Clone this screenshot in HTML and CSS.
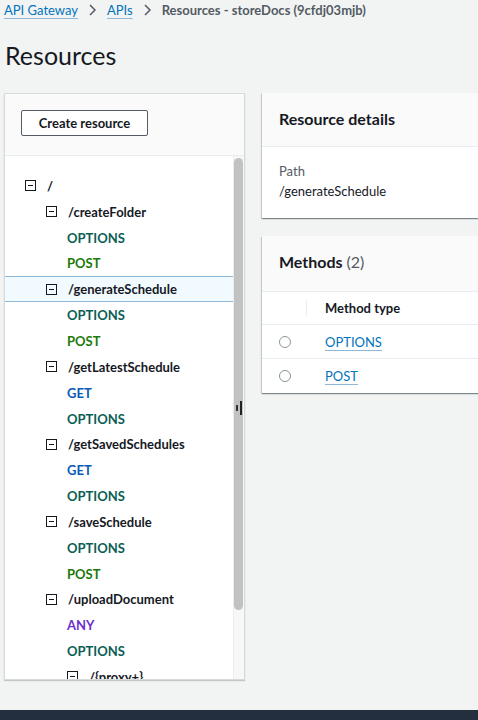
FILE: index.html
```html
<!DOCTYPE html>
<html>
<head>
<meta charset="utf-8">
<link rel="stylesheet" href="styles.css">
</head>
<body>
<div class="page">
  <div class="content">
    <nav class="crumbs">
      <a class="crumb-link">API Gateway</a>
      <svg class="chev" width="7" height="12" viewBox="0 0 7 12"><path d="M1 1l5 5-5 5" fill="none" stroke="#545b64" stroke-width="1.5"/></svg>
      <a class="crumb-link">APIs</a>
      <svg class="chev" width="7" height="12" viewBox="0 0 7 12"><path d="M1 1l5 5-5 5" fill="none" stroke="#545b64" stroke-width="1.5"/></svg>
      <span class="crumb-current">Resources - storeDocs (9cfdj03mjb)</span>
    </nav>
    <h1 class="title">Resources</h1>
    <div class="layout">
      <section class="tree-panel">
        <div class="tree-head">
          <button class="btn">Create resource</button>
        </div>
        <div class="tree-body">
          <div class="tree">
            <div class="row l0"><span class="box"></span><span class="path">/</span></div>
            <div class="row l1"><span class="box"></span><span class="path">/createFolder</span></div>
            <div class="row m"><span class="m-options">OPTIONS</span></div>
            <div class="row m"><span class="m-post">POST</span></div>
            <div class="row l1 selected"><span class="box"></span><span class="path">/generateSchedule</span></div>
            <div class="row m"><span class="m-options">OPTIONS</span></div>
            <div class="row m"><span class="m-post">POST</span></div>
            <div class="row l1"><span class="box"></span><span class="path">/getLatestSchedule</span></div>
            <div class="row m"><span class="m-get">GET</span></div>
            <div class="row m"><span class="m-options">OPTIONS</span></div>
            <div class="row l1"><span class="box"></span><span class="path">/getSavedSchedules</span></div>
            <div class="row m"><span class="m-get">GET</span></div>
            <div class="row m"><span class="m-options">OPTIONS</span></div>
            <div class="row l1"><span class="box"></span><span class="path">/saveSchedule</span></div>
            <div class="row m"><span class="m-options">OPTIONS</span></div>
            <div class="row m"><span class="m-post">POST</span></div>
            <div class="row l1"><span class="box"></span><span class="path">/uploadDocument</span></div>
            <div class="row m"><span class="m-any">ANY</span></div>
            <div class="row m"><span class="m-options">OPTIONS</span></div>
            <div class="row l2"><span class="box"></span><span class="path">/{proxy+}</span></div>
          </div>
          <div class="scrollbar"><div class="thumb"></div></div>
          <div class="resize-handle"><span class="h1"></span><span class="h2"></span></div>
        </div>
      </section>
      <div class="right">
        <section class="card">
          <div class="card-head details-head"><h2 class="card-title">Resource details</h2></div>
          <div class="card-body">
            <div class="label">Path</div>
            <div class="value">/generateSchedule</div>
          </div>
        </section>
        <section class="card">
          <div class="card-head methods-head"><h2 class="card-title">Methods <span class="count">(2)</span></h2></div>
          <div class="table">
            <div class="tr th"><div class="c-radio"><span class="sep"></span></div><div class="c-type">Method type</div></div>
            <div class="tr"><div class="c-radio"><span class="radio"></span></div><div class="c-type"><a class="link">OPTIONS</a></div></div>
            <div class="tr"><div class="c-radio"><span class="radio"></span></div><div class="c-type"><a class="link">POST</a></div></div>
          </div>
        </section>
      </div>
    </div>
  </div>
  <footer class="footer"></footer>
</div>
</body>
</html>
```

FILE: styles.css
```css
html, body {
  margin: 0;
  padding: 0;
  background: #f2f3f3;
  overflow: hidden;
}
body {
  font-family: Lato, "Open Sans", Arial, sans-serif;
  color: #16191f;
  width: 478px;
  height: 720px;
}
.page {
  height: 720px;
  display: flex;
  flex-direction: column;
}
.content {
  flex: 1;
  padding-left: 4px;
  overflow: hidden;
}
.crumbs {
  display: flex;
  align-items: center;
  height: 20px;
  font-size: 13px;
  gap: 11px;
  white-space: nowrap;
}
.crumb-link {
  color: #0073bb;
  text-decoration: underline;
  text-underline-offset: 3px;
  text-decoration-color: #8fb8d8;
}
.chev { display: block; }
.crumb-current {
  color: #545b64;
  font-weight: 700;
}
.title {
  margin: 20px 0 0 1px;
  font-size: 25px;
  line-height: 30px;
  font-weight: 400;
  color: #16191f;
}
.layout {
  display: grid;
  grid-template-columns: 241px 330px;
  column-gap: 17px;
  margin-top: 23px;
  align-items: start;
}
.tree-panel {
  height: 587px;
  box-sizing: border-box;
  border: 1px solid #d5dbdb;
  background: #fff;
  display: flex;
  flex-direction: column;
  box-shadow: 0 1px 1px 0 rgba(0,28,36,.2);
}
.tree-head {
  height: 62px;
  flex: none;
  background: #fafafa;
  border-bottom: 1px solid #eaeded;
  padding: 16px 0 0 16px;
  box-sizing: border-box;
}
.btn {
  width: 127px;
  height: 26px;
  background: #fff;
  border: 1px solid #545b64;
  border-radius: 2px;
  font-family: inherit;
  font-size: 13px;
  font-weight: 700;
  color: #16191f;
  padding: 0;
}
.tree-body {
  flex: 1;
  display: flex;
  position: relative;
  overflow: hidden;
}
.tree {
  flex: 1;
  padding-top: 17px;
}
.row {
  height: 25.85px;
  box-sizing: border-box;
  display: flex;
  align-items: center;
  gap: 11px;
  font-size: 13px;
  font-weight: 700;
  white-space: nowrap;
}
.l0 { padding-left: 20px; }
.l1 { padding-left: 41px; }
.l2 { padding-left: 62px; }
.m { padding-left: 62px; }
.selected {
  background: #f1faff;
  border-top: 1px solid #8fb8d8;
  border-bottom: 1px solid #8fb8d8;
}
.box {
  width: 11px;
  height: 11px;
  box-sizing: border-box;
  border: 1px solid #16191f;
  position: relative;
  flex: none;
}
.box::after {
  content: "";
  position: absolute;
  left: 2px;
  right: 2px;
  top: 4px;
  height: 1px;
  background: #16191f;
}
.path { color: #16191f; }
.m-options { color: #0b5e55; }
.m-post { color: #1d7a0a; }
.m-get { color: #0b5bb5; }
.m-any { color: #6b2fd0; }
.scrollbar {
  width: 10px;
  flex: none;
  background: #f7f7f7;
  border-left: 1px solid #eaeded;
  padding-top: 2px;
}
.thumb {
  width: 9px;
  height: 452px;
  background: #c2c2c2;
  border-radius: 5px;
}
.resize-handle {
  position: absolute;
  left: 231px;
  top: 245px;
  display: flex;
  align-items: center;
  gap: 2px;
}
.h1 { width: 2px; height: 6px; background: #333; }
.h2 { width: 2px; height: 14px; background: #222; }
.right {
  display: flex;
  flex-direction: column;
  gap: 18px;
}
.card {
  background: #fff;
  box-shadow: 0 1px 1px 0 rgba(0,28,36,.3), 1px 1px 1px 0 rgba(0,28,36,.15), -1px 1px 1px 0 rgba(0,28,36,.15);
}
.card-head {
  height: 54px;
  background: #fafafa;
  border-bottom: 1px solid #eaeded;
  box-sizing: border-box;
  display: flex;
  align-items: center;
  padding-left: 17px;
}
.details-head { padding-bottom: 2px; }
.methods-head { height: 56px; padding-bottom: 5px; }
.card-title {
  margin: 0;
  font-size: 16px;
  font-weight: 700;
  color: #16191f;
}
.count { font-weight: 400; color: #545b64; }
.card-body {
  padding: 14px 17px 0;
  height: 71px;
  box-sizing: border-box;
  font-size: 13px;
}
.label { color: #545b64; line-height: 20px; }
.value { color: #16191f; line-height: 20px; }
.table { font-size: 13px; }
.tr {
  display: flex;
  align-items: center;
  height: 34px;
  border-bottom: 1px solid #eaeded;
  box-sizing: border-box;
}
.tr:last-child { border-bottom: none; }
.th { height: 33px; font-weight: 700; }
.c-radio {
  width: 45px;
  height: 100%;
  display: flex;
  align-items: center;
  justify-content: flex-start;
  position: relative;
  padding-left: 17px;
  box-sizing: border-box;
}
.sep {
  position: absolute;
  right: 0;
  top: 8px;
  height: 16px;
  width: 1px;
  background: #eaeded;
}
.radio {
  width: 12px;
  height: 12px;
  border: 1px solid #879596;
  border-radius: 50%;
  box-sizing: border-box;
}
.c-type { padding-left: 18px; }
.link {
  color: #0073bb;
  text-decoration: underline;
  text-underline-offset: 3px;
  text-decoration-color: #8fb8d8;
}
.footer {
  height: 10px;
  flex: none;
  background: #232f3e;
}
```
